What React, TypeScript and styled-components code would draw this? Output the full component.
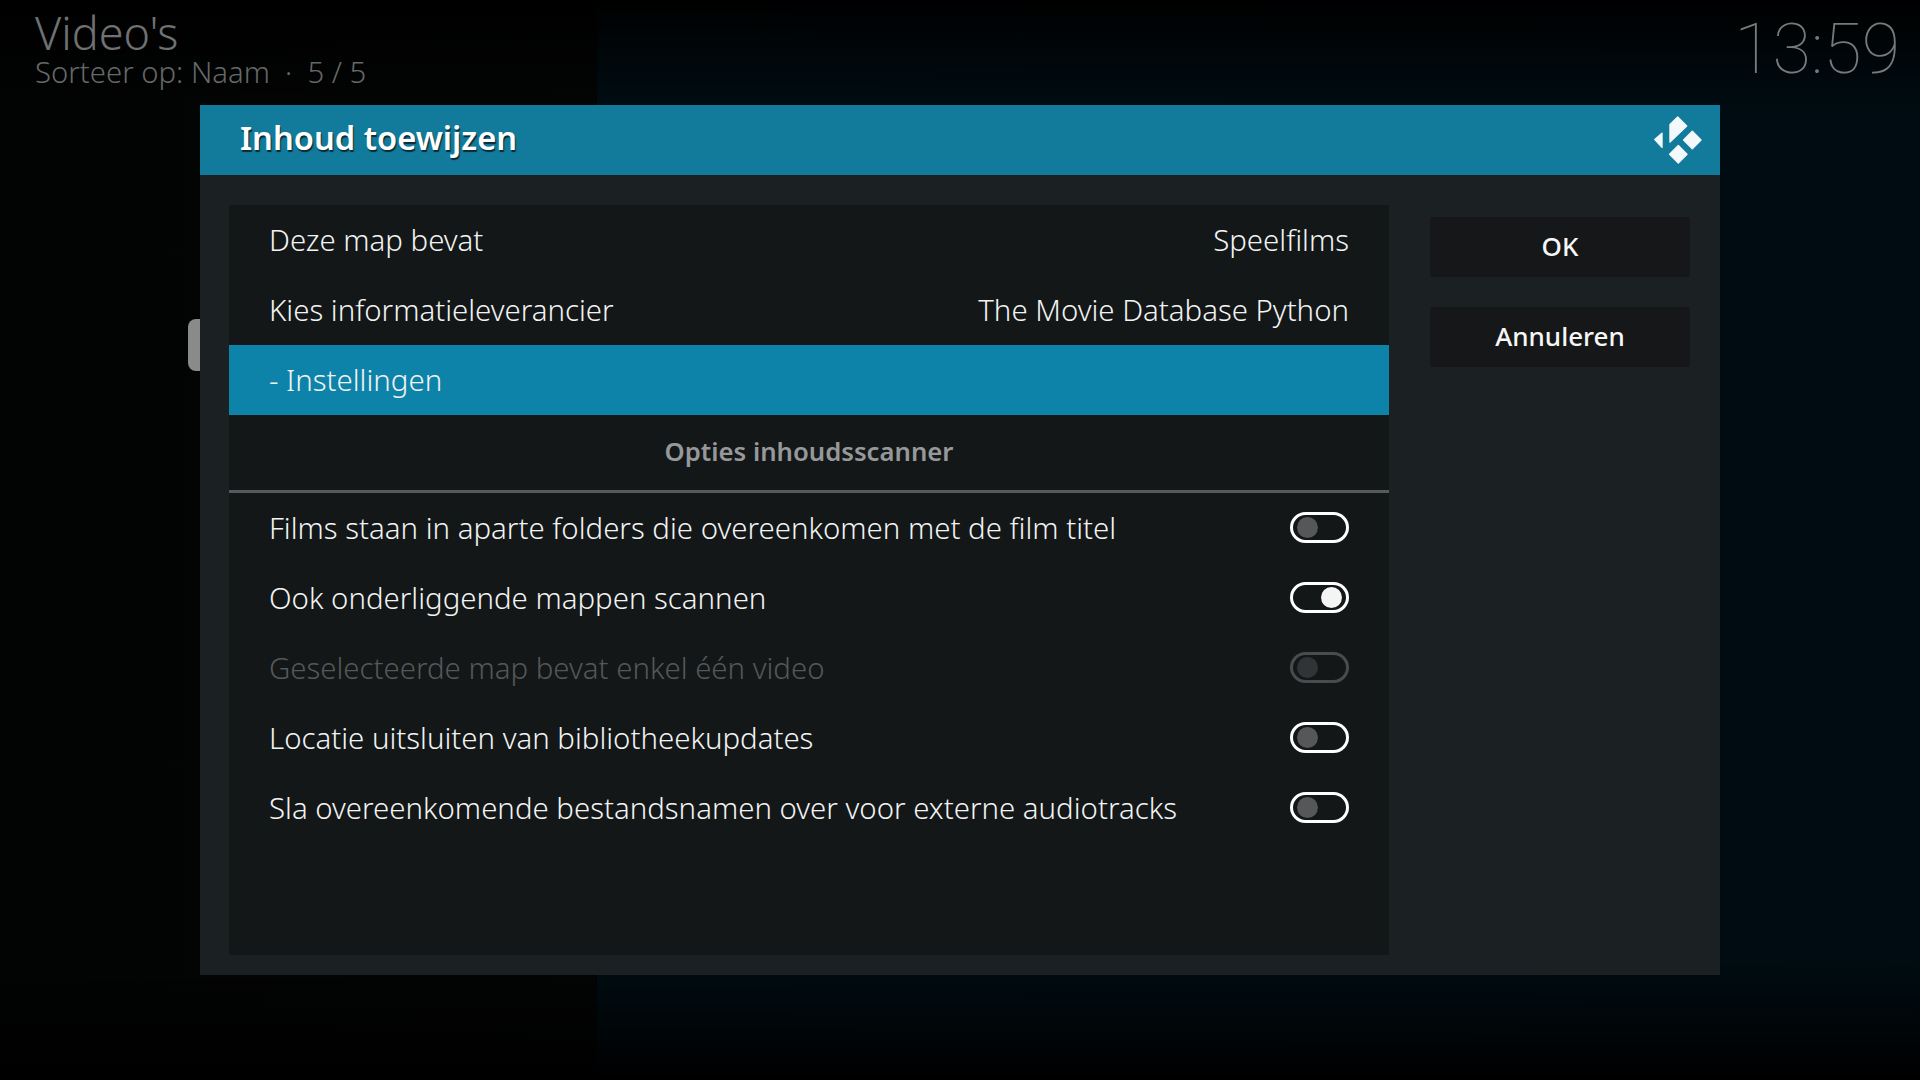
import React from 'react'
import styled, { createGlobalStyle } from 'styled-components'

const GlobalStyle = createGlobalStyle`
    html, body {
        margin: 0;
        padding: 0;
        background: #000;
    }
    * {
        box-sizing: border-box;
    }
`

const Page = styled.div`
    position: relative;
    width: 1920px;
    height: 1080px;
    overflow: hidden;
    font-family: "Noto Sans", "Open Sans", sans-serif;
    background:
        linear-gradient(180deg, #000 0px, rgba(0, 0, 0, 0) 110px),
        linear-gradient(180deg, rgba(0, 0, 0, 0) 960px, #000 1080px),
        linear-gradient(90deg, #020303 0px, #030404 597px, #000d13 597px, #000c12 1920px);
`

const TopBar = styled.header`
    display: flex;
    justify-content: space-between;
    align-items: flex-start;
    height: 105px;
    padding: 10px 20px 0 35px;
`

const TitleBlock = styled.div`
    display: flex;
    flex-direction: column;
`

const PageTitle = styled.div`
    font-size: 45px;
    font-weight: 300;
    line-height: 46px;
    color: #6f7172;
`

const PageSubtitle = styled.div`
    font-size: 29.3px;
    font-weight: 300;
    line-height: 32px;
    color: #666869;
    white-space: pre;
`

const Clock = styled.div`
    font-family: Roboto, "Noto Sans", sans-serif;
    font-size: 70px;
    font-weight: 100;
    line-height: 84px;
    margin-top: -3px;
    color: #77797a;
`

const ScrollHandle = styled.div`
    position: absolute;
    left: 188px;
    top: 319px;
    width: 20px;
    height: 52px;
    border-radius: 8px;
    background: #8a8a8a;
`

const Dialog = styled.section`
    position: relative;
    width: 1520px;
    height: 870px;
    margin-left: 200px;
    background: #1b2023;
`

const DialogHeader = styled.div`
    display: flex;
    align-items: center;
    justify-content: space-between;
    height: 70px;
    padding: 0 18px 0 40px;
    background: #127b9c;
`

const DialogTitle = styled.h1`
    margin: 0 0 5px;
    font-size: 32.7px;
    font-weight: 600;
    color: #fff;
    text-shadow: 1px 2px 1px #0a2a36;
`

const DialogBody = styled.div`
    display: flex;
    align-items: flex-start;
    padding: 30px 30px 20px 29px;
    height: 800px;
`

const SettingsList = styled.div`
    width: 1160px;
    height: 750px;
    background: #131718;
`

const Row = styled.div<{ $active?: boolean; $disabled?: boolean }>`
    display: flex;
    align-items: center;
    justify-content: space-between;
    height: 70px;
    padding: 0 40px;
    font-size: 29.4px;
    font-weight: 300;
    color: ${p => (p.$disabled ? '#55585a' : '#f2f3f3')};
    background: ${p => (p.$active ? '#0e83a9' : 'transparent')};
`

const SectionTitle = styled.div`
    display: flex;
    align-items: center;
    justify-content: center;
    height: 78px;
    padding-bottom: 2px;
    border-bottom: 3px solid #565a5c;
    font-size: 25.7px;
    font-weight: 600;
    color: #96989a;
`

const Toggle = styled.div<{ $on?: boolean; $disabled?: boolean }>`
    display: flex;
    align-items: center;
    justify-content: ${p => (p.$on ? 'flex-end' : 'flex-start')};
    width: 59px;
    height: 31px;
    margin-bottom: 2px;
    padding: 0 4px;
    border: 3px solid ${p => (p.$disabled ? '#494c4e' : '#fff')};
    border-radius: 16px;
`

const Knob = styled.span<{ $on?: boolean; $disabled?: boolean }>`
    width: 21px;
    height: 21px;
    border-radius: 50%;
    background: ${p => (p.$on ? '#f4f4f4' : p.$disabled ? '#313436' : '#555759')};
`

const ButtonColumn = styled.div`
    display: flex;
    flex-direction: column;
    gap: 30px;
    width: 260px;
    margin: 12px 0 0 41px;
`

const DialogButton = styled.div`
    display: flex;
    align-items: center;
    justify-content: center;
    height: 60px;
    padding-bottom: 2px;
    border-radius: 2px;
    font-size: 26px;
    font-weight: 500;
    color: #f6f6f6;
    background: #151718;
`

const KodiLogo = () => (
    <svg width="48" height="48" viewBox="0 0 48 48" fill="#f3f8fa" stroke="#f3f8fa" strokeWidth="1.4" strokeLinejoin="round">
        <polygon points="0.8,23.6 8,17.2 8,31.4" />
        <polygon points="23.7,1 32.7,10 16,26 16,8.4" />
        <polygon points="38.3,15.3 47,24 38.3,32.7 29.6,24" />
        <polygon points="24.3,29.6 33,38.3 24.3,47 15.6,38.3" />
    </svg>
)

const options = [
    { label: 'Films staan in aparte folders die overeenkomen met de film titel' },
    { label: 'Ook onderliggende mappen scannen', on: true },
    { label: 'Geselecteerde map bevat enkel één video', disabled: true },
    { label: 'Locatie uitsluiten van bibliotheekupdates' },
    { label: 'Sla overeenkomende bestandsnamen over voor externe audiotracks' }
]

export default function App() {
    return (
        <Page>
            <GlobalStyle />
            <TopBar>
                <TitleBlock>
                    <PageTitle>Video's</PageTitle>
                    <PageSubtitle>Sorteer op: Naam  ·  5 / 5</PageSubtitle>
                </TitleBlock>
                <Clock>13:59</Clock>
            </TopBar>
            <ScrollHandle />
            <Dialog>
                <DialogHeader>
                    <DialogTitle>Inhoud toewijzen</DialogTitle>
                    <KodiLogo />
                </DialogHeader>
                <DialogBody>
                    <SettingsList>
                        <Row>
                            <span>Deze map bevat</span>
                            <span>Speelfilms</span>
                        </Row>
                        <Row>
                            <span>Kies informatieleverancier</span>
                            <span>The Movie Database Python</span>
                        </Row>
                        <Row $active>
                            <span>- Instellingen</span>
                        </Row>
                        <SectionTitle>Opties inhoudsscanner</SectionTitle>
                        {options.map(o => (
                            <Row key={o.label} $disabled={o.disabled}>
                                <span>{o.label}</span>
                                <Toggle $on={o.on} $disabled={o.disabled}>
                                    <Knob $on={o.on} $disabled={o.disabled} />
                                </Toggle>
                            </Row>
                        ))}
                    </SettingsList>
                    <ButtonColumn>
                        <DialogButton>OK</DialogButton>
                        <DialogButton>Annuleren</DialogButton>
                    </ButtonColumn>
                </DialogBody>
            </Dialog>
        </Page>
    )
}
